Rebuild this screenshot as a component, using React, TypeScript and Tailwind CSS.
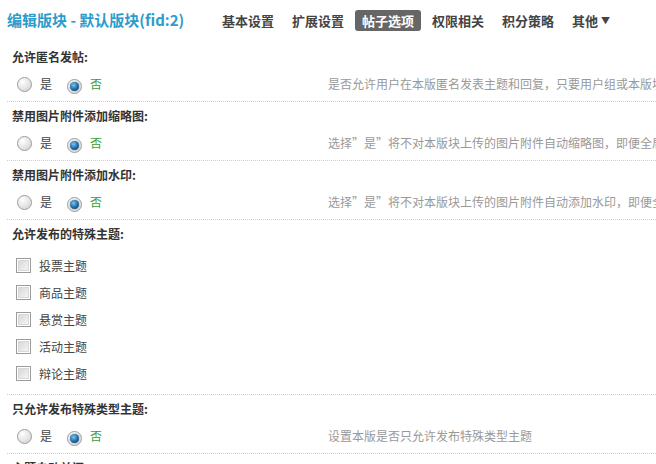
import React from "react";

const font = { fontFamily: '"Noto Sans CJK SC", "Liberation Sans", sans-serif' };

function Radio({ checked }: { checked?: boolean }) {
  return (
    <span className="relative inline-flex h-[15px] w-[15px] items-center justify-center rounded-full border border-[#9a9a9a] bg-[radial-gradient(circle_at_35%_30%,#ffffff,#e4e4e4_55%,#c8c8c8)] shadow-[inset_0_0_1px_#fff]">
      {checked && (
        <span className="h-[9px] w-[9px] rounded-full bg-[radial-gradient(circle_at_40%_35%,#7fc4ee,#1f6fa8_50%,#0b2f4f)] shadow-[0_0_1px_#0b2f4f]" />
      )}
    </span>
  );
}

function Check() {
  return (
    <span className="inline-flex h-[15px] w-[15px] items-center justify-center border border-[#9b9b9b] bg-white">
      <span className="h-[11px] w-[11px] border border-[#d8d8d8] bg-[linear-gradient(135deg,#d8d8d8,#f4f4f4)]" />
    </span>
  );
}

function RadioRow({ desc }: { desc: string }) {
  return (
    <div className="flex h-[30px] items-center pb-[4px]">
      <div className="flex w-[328px] shrink-0 items-center pl-[17px]">
        <Radio />
        <span className="ml-[8px] text-[12px] text-[#444]">是</span>
        <span className="ml-[15px]">
          <Radio checked />
        </span>
        <span className="ml-[8px] text-[12px] text-[#33a033]">否</span>
      </div>
      <div className="min-w-0 overflow-hidden whitespace-nowrap text-[12px] text-[#999]">{desc}</div>
    </div>
  );
}

function Label({ children }: { children: React.ReactNode }) {
  return (
    <div className="flex h-[28px] items-center pl-[12px] text-[12px] font-bold text-[#333]">{children}</div>
  );
}

function Divider() {
  return <div className="ml-[7px] border-b border-dotted border-[#cfcfcf]" />;
}

export default function App() {
  const tabs = ["基本设置", "扩展设置", "帖子选项", "权限相关", "积分策略"];
  return (
    <div className="h-[464px] w-[656px] overflow-hidden bg-white" style={font}>
      <div className="flex h-[43px] items-center pl-[7px] pb-[2px]">
        <div className="w-[208px] shrink-0 text-[15px] font-bold text-[#2b9ccb]">编辑版块 - 默认版块(fid:2)</div>
        <div className="flex items-center gap-[4px]">
          {tabs.map((t) => (
            <div
              key={t}
              className={
                t === "帖子选项"
                  ? "flex h-[21px] items-center rounded-[3px] bg-[#666] px-[7px] text-[13px] font-bold text-white"
                  : "flex h-[21px] items-center px-[7px] text-[13px] font-bold text-[#444]"
              }
            >
              {t}
            </div>
          ))}
          <div className="flex h-[21px] items-center px-[7px] text-[13px] font-bold text-[#444]">
            其他
            <span className="ml-[3px] text-[9px]">▼</span>
          </div>
        </div>
      </div>

      <Label>允许匿名发帖:</Label>
      <RadioRow desc="是否允许用户在本版匿名发表主题和回复，只要用户组或本版块允许匿名发帖，均可匿名发帖。" />
      <Divider />

      <Label>禁用图片附件添加缩略图:</Label>
      <RadioRow desc="选择”是”将不对本版块上传的图片附件自动缩略图，即便全局设置开启了此功能" />
      <Divider />

      <Label>禁用图片附件添加水印:</Label>
      <RadioRow desc="选择”是”将不对本版块上传的图片附件自动添加水印，即便全局设置开启了此功能" />
      <Divider />

      <Label>允许发布的特殊主题:</Label>
      <div className="pt-[4px] pb-[7px]">
        {["投票主题", "商品主题", "悬赏主题", "活动主题", "辩论主题"].map((t) => (
          <div key={t} className="flex h-[27px] items-center pl-[16px]">
            <Check />
            <span className="ml-[8px] text-[12px] text-[#444]">{t}</span>
          </div>
        ))}
      </div>
      <Divider />

      <Label>只允许发布特殊类型主题:</Label>
      <RadioRow desc="设置本版是否只允许发布特殊类型主题" />
      <Divider />

      <Label>主题自动关闭:</Label>
    </div>
  );
}
